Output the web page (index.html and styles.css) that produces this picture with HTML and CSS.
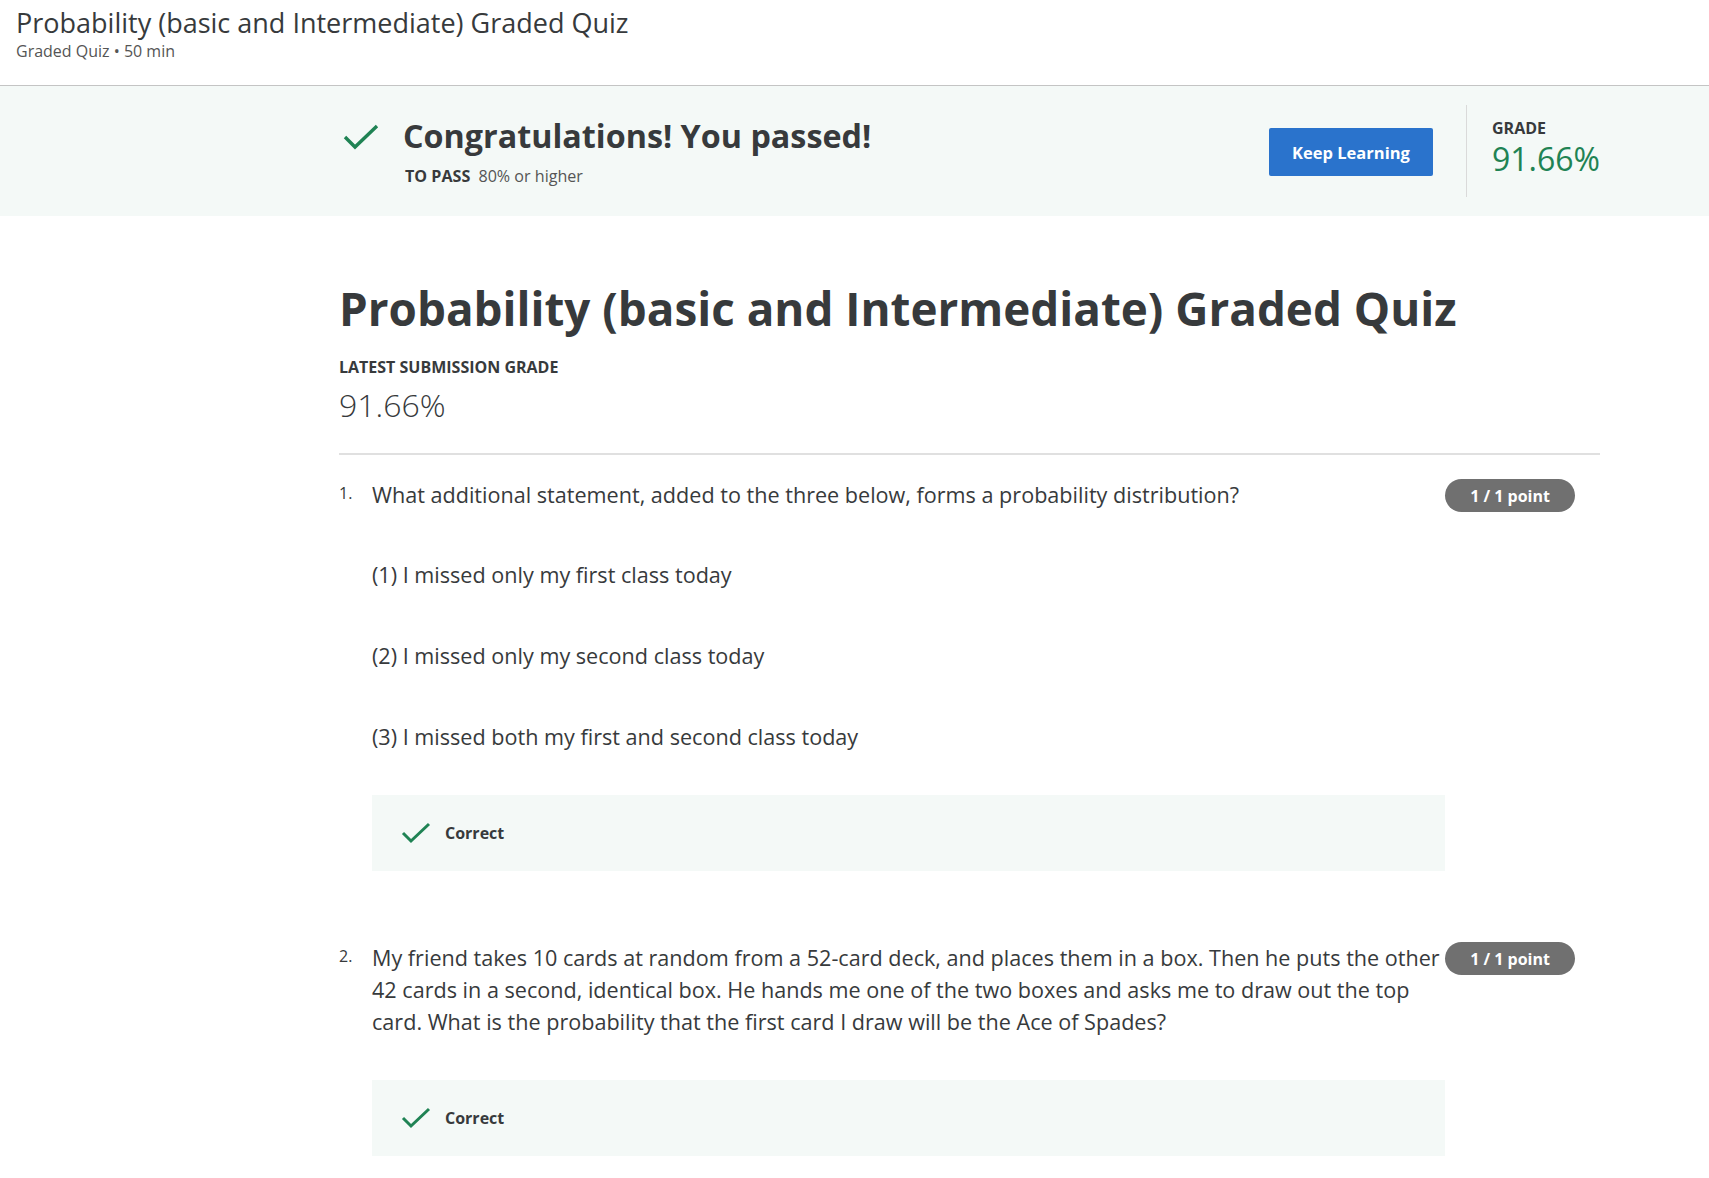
FILE: index.html
```html
<!DOCTYPE html>
<html lang="en">
<head>
<meta charset="utf-8">
<title>Probability (basic and Intermediate) Graded Quiz</title>
<link rel="stylesheet" href="styles.css">
</head>
<body>
<header class="top-header">
  <h1 class="top-title">Probability (basic and Intermediate) Graded Quiz</h1>
  <div class="top-sub">Graded Quiz • 50 min</div>
</header>

<section class="banner">
  <div class="banner-inner">
    <div class="banner-left">
      <svg class="banner-check" viewBox="0 0 36 26" width="36" height="26" aria-hidden="true">
        <path d="M2 13 L12 23 L34 2" fill="none" stroke="#1f8354" stroke-width="3.4"/>
      </svg>
      <div class="banner-text">
        <div class="banner-title">Congratulations! You passed!</div>
        <div class="banner-pass"><span class="pass-label">TO PASS</span> 80% or higher</div>
      </div>
    </div>
    <button class="btn-keep">Keep Learning</button>
    <div class="banner-divider"></div>
    <div class="banner-grade">
      <div class="grade-label">GRADE</div>
      <div class="grade-value">91.66%</div>
    </div>
  </div>
</section>

<main class="content">
  <h2 class="quiz-title">Probability (basic and Intermediate) Graded Quiz</h2>
  <div class="latest-label">LATEST SUBMISSION GRADE</div>
  <div class="latest-value">91.66%</div>
  <hr class="rule">

  <div class="question">
    <div class="q-num">1.</div>
    <div class="q-body">
      <p class="q-text">What additional statement, added to the three below, forms a probability distribution?</p>
      <p class="q-opt">(1) I missed only my first class today</p>
      <p class="q-opt">(2) I missed only my second class today</p>
      <p class="q-opt">(3) I missed both my first and second class today</p>
      <div class="feedback">
        <svg class="fb-check" viewBox="0 0 30 22" width="30" height="22" aria-hidden="true">
          <path d="M2 11 L10 19 L28 2" fill="none" stroke="#1f8354" stroke-width="3"/>
        </svg>
        <span class="fb-text">Correct</span>
      </div>
    </div>
    <div class="q-points"><span class="badge">1 / 1 point</span></div>
  </div>

  <div class="question">
    <div class="q-num">2.</div>
    <div class="q-body">
      <p class="q-text">My friend takes 10 cards at random from a 52-card deck, and places them in a box. Then he puts the other 42 cards in a second, identical box. He hands me one of the two boxes and asks me to draw out the top card. What is the probability that the first card I draw will be the Ace of Spades?</p>
      <div class="feedback">
        <svg class="fb-check" viewBox="0 0 30 22" width="30" height="22" aria-hidden="true">
          <path d="M2 11 L10 19 L28 2" fill="none" stroke="#1f8354" stroke-width="3"/>
        </svg>
        <span class="fb-text">Correct</span>
      </div>
    </div>
    <div class="q-points"><span class="badge">1 / 1 point</span></div>
  </div>
</main>
</body>
</html>
```

FILE: styles.css
```css
* { box-sizing: border-box; }
html, body { margin: 0; padding: 0; background: #fff; }
body {
  font-family: "Open Sans", "Noto Sans", sans-serif;
  color: #373a3c;
}

.top-header {
  height: 86px;
  padding: 6px 16px 0;
  border-bottom: 1px solid #c4c4c4;
}
.top-title {
  margin: 0;
  font-size: 27px;
  font-weight: 400;
  line-height: 34px;
  color: #373a3c;
}
.top-sub {
  font-size: 16px;
  line-height: 22px;
  color: #555;
}

.banner {
  background: #f4f9f7;
  padding: 19px 0 19px 339px;
}
.banner-inner {
  width: 1261px;
  height: 92px;
  display: flex;
  align-items: center;
}
.banner-left {
  flex: 1;
  display: flex;
  align-items: flex-start;
  gap: 24px;
  padding-left: 4px;
}
.banner-check { margin-top: 10px; flex-shrink: 0; }
.banner-title {
  font-size: 32.3px;
  font-weight: 700;
  line-height: 40px;
  margin-top: 1px;
}
.banner-pass {
  font-size: 16.1px;
  line-height: 24px;
  color: #555;
  margin-top: 9px;
  padding-left: 2px;
}
.pass-label { font-weight: 700; color: #373a3c; margin-right: 4px; }
.btn-keep {
  width: 164px;
  height: 48px;
  background: #2a73cc;
  color: #fff;
  border: none;
  border-radius: 2px;
  font-family: inherit;
  font-size: 16.5px;
  font-weight: 700;
  padding: 0;
  margin-top: 2px;
}
.banner-divider {
  width: 1px;
  height: 92px;
  background: #dadada;
  margin: 0 25px 0 33px;
}
.banner-grade { width: 108px; margin-top: -6px; }
.grade-label {
  font-size: 16px;
  font-weight: 700;
  line-height: 20px;
}
.grade-value {
  font-size: 32px;
  line-height: 40px;
  color: #1f8354;
  margin-top: 1px;
}

.content {
  padding-left: 339px;
  width: 1600px;
  padding-top: 62px;
}
.quiz-title {
  margin: 0;
  font-size: 45.8px;
  font-weight: 700;
  line-height: 60px;
}
.latest-label {
  margin-top: 18px;
  font-size: 16px;
  font-weight: 700;
  line-height: 22px;
}
.latest-value {
  margin-top: 7px;
  font-size: 32px;
  line-height: 40px;
  font-weight: 300;
}
.rule {
  border: 0;
  border-top: 2px solid #e0e0e0;
  margin: 28px 0 0;
}

.question {
  display: flex;
  align-items: flex-start;
  padding-top: 24px;
  margin-bottom: 47px;
}
.q-num {
  width: 33px;
  font-size: 16px;
  line-height: 32px;
  margin-top: -2px;
}
.q-body { width: 1073px; }
.q-text, .q-opt {
  margin: 0;
  font-size: 21.6px;
  line-height: 32px;
}
.q-opt { margin-top: 49px; }
.q-text + .q-opt { margin-top: 48px; }
.feedback {
  margin-top: 42px;
  height: 76px;
  background: #f4f9f7;
  display: flex;
  align-items: center;
  padding-left: 29px;
  gap: 14px;
}
.fb-text { font-size: 16px; font-weight: 700; }
.q-points { width: 130px; }
.badge {
  display: inline-flex;
  align-items: center;
  justify-content: center;
  width: 130px;
  height: 33px;
  border-radius: 17px;
  background: #707070;
  color: #fff;
  font-size: 16px;
  font-weight: 700;
  margin-top: 0;
}
.question + .question .feedback { margin-top: 42px; }
```
